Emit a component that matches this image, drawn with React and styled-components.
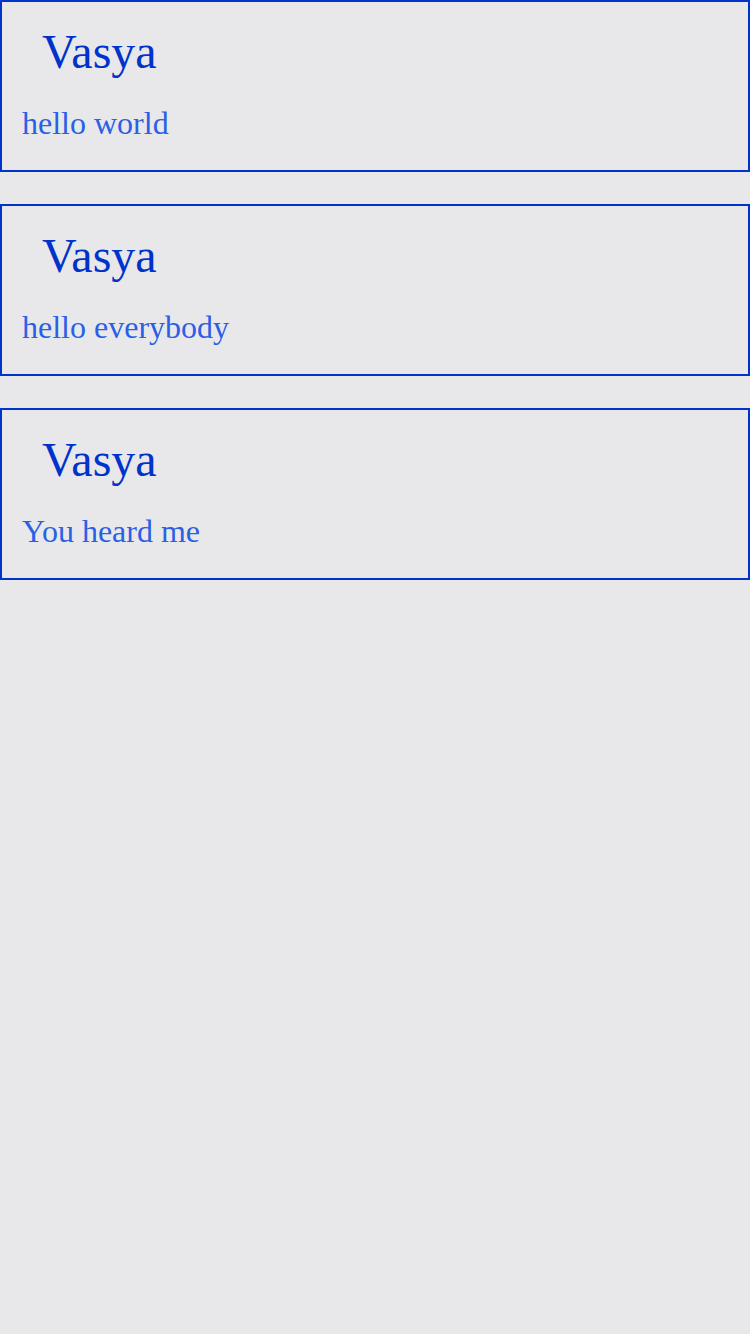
import styled, { createGlobalStyle } from "styled-components"

const GlobalStyle = createGlobalStyle`
  html, body {
    margin: 0;
    padding: 0;
    background: #e8e8ea;
    font-family: "Liberation Serif", "Times New Roman", serif;
  }
`

const messages = [
  { author: "Vasya", text: "hello world" },
  { author: "Vasya", text: "hello everybody" },
  { author: "Vasya", text: "You heard me" },
]

function App() {
  return (
    <Page>
      <GlobalStyle />
      {messages.map((m, i) => (
        <Card key={i}>
          <Author>{m.author}</Author>
          <Text>{m.text}</Text>
        </Card>
      ))}
    </Page>
  )
}

const Page = styled.div`
  width: 750px;
  min-height: 1334px;
  display: flex;
  flex-direction: column;
  gap: 32px;
`

const Card = styled.div`
  box-sizing: border-box;
  height: 172px;
  border: 2px solid #0033cc;
  padding: 0 20px;
`

const Author = styled.h2`
  margin: 20px 0 0 20px;
  font-size: 48px;
  font-weight: normal;
  line-height: 60px;
  color: #0033cc;
`

const Text = styled.p`
  margin: 21px 0 0;
  font-size: 32px;
  line-height: 40px;
  color: #2a5fe6;
`

export default App
